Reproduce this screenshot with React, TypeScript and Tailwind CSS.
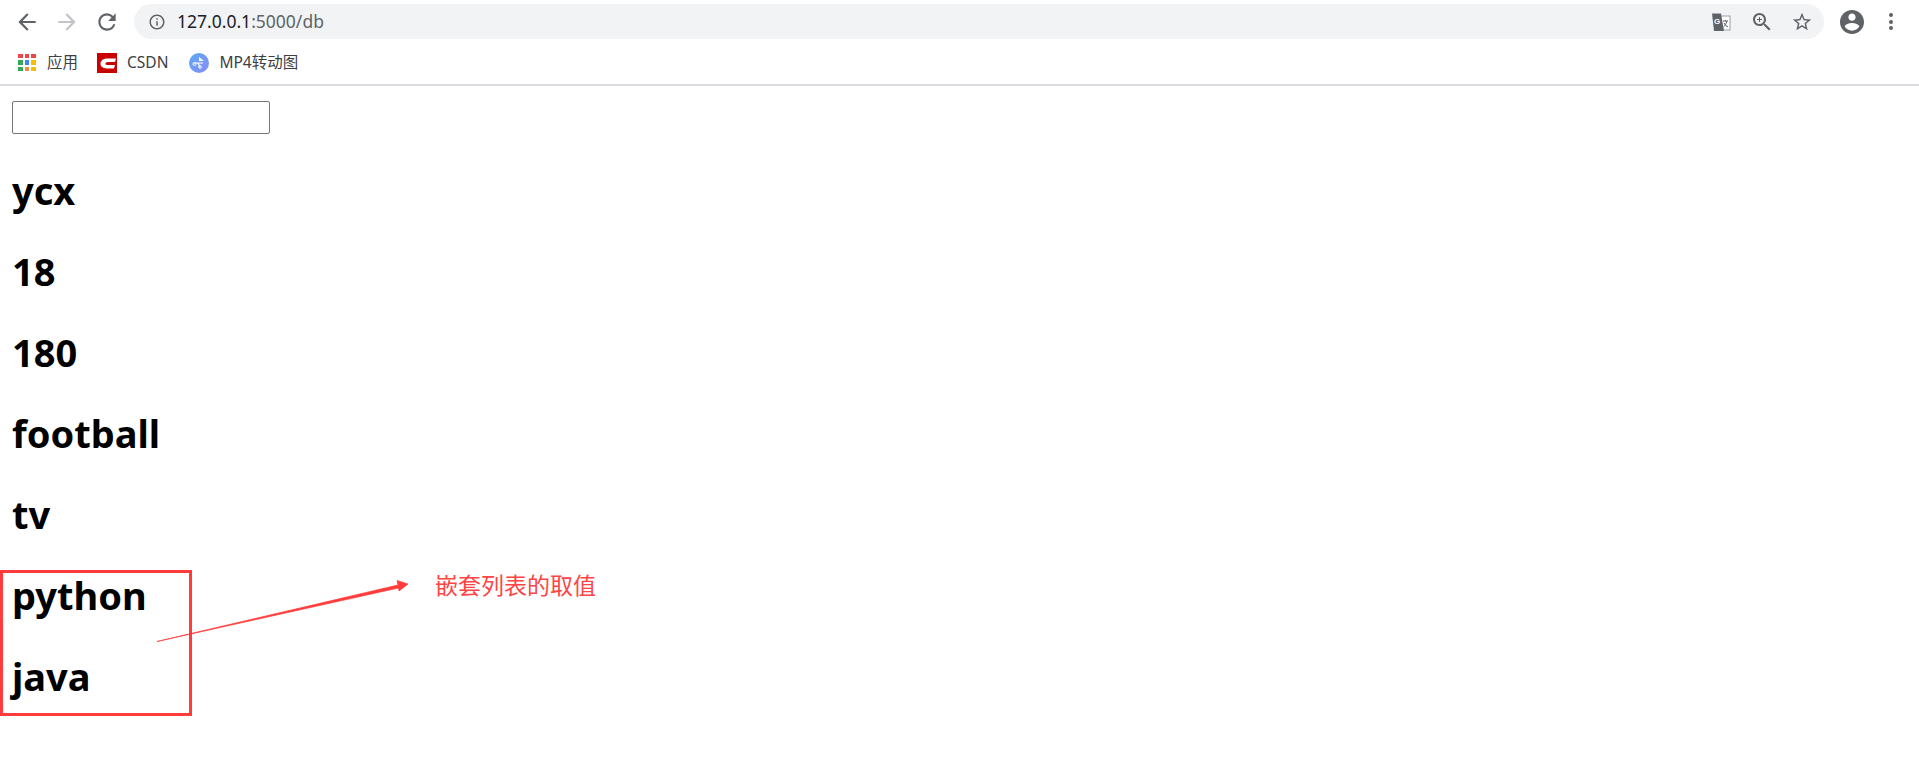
const items = ['ycx', '18', '180', 'football', 'tv', 'python', 'java']

function Glyph({ d, size, viewBox = '0 0 24 24', className }: { d: string; size: number; viewBox?: string; className?: string }) {
  return (
    <svg width={size} height={size} viewBox={viewBox} fill="currentColor" className={'shrink-0 ' + (className ?? '')}>
      <path d={d} />
    </svg>
  )
}

function AppsIcon() {
  const colors = ['#ef4444', '#ef4444', '#ef4444', '#34a853', '#4285f4', '#fbbc04', '#34a853', '#ea8f3c', '#fbbc04']
  return (
    <div className="grid grid-cols-3 gap-[2px] w-[18px] shrink-0">
      {colors.map((c, i) => (
        <span key={i} className="w-[4.500px] h-[4.500px]" style={{ backgroundColor: c }} />
      ))}
    </div>
  )
}

function CsdnIcon() {
  return (
    <svg width="20" height="20" viewBox="0 0 20 20" className="shrink-0">
      <rect width="20" height="20" fill="#c80000" />
      <path d="M19 5.500 H10 C6 5.500 3.500 8 3.500 10.800 C3.500 13.500 6 15.500 10 15.500 H17 L18 12 H11 C9 12 8.500 11.400 8.500 10.700 C8.500 9.800 9.200 9 11 9 H18 Z" fill="#fff" />
    </svg>
  )
}

function Mp4Icon() {
  return (
    <svg width="20" height="20" viewBox="0 0 20 20" className="shrink-0">
      <defs>
        <linearGradient id="mp4" x1="0" y1="0" x2="1" y2="1">
          <stop offset="0" stopColor="#5aa9f8" />
          <stop offset="1" stopColor="#8a8cf5" />
        </linearGradient>
      </defs>
      <circle cx="10" cy="10" r="10" fill="url(#mp4)" />
      <path d="M10 4 L15 8 H10 Z" fill="#fff" />
      <path d="M5 10 L14 10 M9 10 L11 14" stroke="#fff" strokeWidth="1.2" fill="none" />
      <circle cx="5.500" cy="11" r="1.500" fill="none" stroke="#fff" />
      <circle cx="11" cy="14" r="1.300" fill="none" stroke="#fff" />
    </svg>
  )
}

function TranslateIcon() {
  return (
    <svg width="20" height="20" viewBox="0 0 20 20" className="shrink-0">
      <rect x="6.500" y="4" width="12.500" height="14" fill="#fff" stroke="#9aa0a6" />
      <path d="M1 1.500 H10 L13 19 H3 Z" fill="#5f6368" />
      <text x="3" y="12" fontSize="8" fontWeight="700" fill="#fff" fontFamily="Liberation Sans, sans-serif">G</text>
      <path d="M12 9 H17 M14.500 8 V9 M16 9 C15 12 14 14 12.500 15 M13 11 C14 13 15 14 17 15" stroke="#5f6368" strokeWidth="1" fill="none" />
    </svg>
  )
}

export default function App() {
  return (
    <div className="relative min-h-[777px] bg-white font-['Noto_Sans','Noto_Sans_CJK_SC',sans-serif] text-black overflow-hidden">
      <div className="h-[43px] flex items-center pl-[14px]">
        <Glyph size={26} className="text-[#5f6368]" d="M20 11H7.830l5.590-5.590L12 4l-8 8 8 8 1.410-1.410L7.830 13H20v-2z" />
        <Glyph size={26} className="text-[#c2c4c7] ml-[14px]" d="M12 4l-1.410 1.410L16.170 11H4v2h12.170l-5.580 5.590L12 20l8-8z" />
        <Glyph size={26} className="text-[#5f6368] ml-[14px]" d="M17.650 6.350A7.958 7.958 0 0 0 12 4c-4.420 0-7.990 3.580-7.990 8s3.570 8 7.990 8c3.730 0 6.840-2.550 7.730-6h-2.080A5.990 5.990 0 0 1 12 18c-3.310 0-6-2.690-6-6s2.690-6 6-6c1.660 0 3.140.690 4.220 1.780L13 11h7V4l-2.350 2.350z" />
        <div className="ml-[14px] w-[1690px] h-[35px] rounded-full bg-[#f1f3f4] flex items-center pl-[14px] pr-[11px] shrink-0">
          <Glyph size={18} className="text-[#5f6368]" d="M11 7h2v2h-2zm0 4h2v6h-2zm1-9C6.480 2 2 6.480 2 12s4.480 10 10 10 10-4.480 10-10S17.520 2 12 2zm0 18c-4.410 0-8-3.590-8-8s3.590-8 8-8 8 3.590 8 8-3.590 8-8 8z" />
          <span className="ml-[11px] text-[17.500px]">
            <span className="text-[#202124]">127.0.0.1</span>
            <span className="text-[#5f6368]">:5000/db</span>
          </span>
          <div className="ml-auto flex items-center text-[#5f6368]">
            <TranslateIcon />
            <Glyph size={24} className="ml-[19px]" d="M15.500 14h-.790l-.280-.270C15.410 12.590 16 11.110 16 9.500 16 5.910 13.090 3 9.500 3S3 5.910 3 9.500 5.910 16 9.500 16c1.610 0 3.090-.590 4.230-1.570l.270.280v.790l5 4.990L20.490 19l-4.990-5zm-6 0C7.010 14 5 11.990 5 9.500S7.010 5 9.500 5 14 7.010 14 9.500 11.990 14 9.500 14zM12 10h-2v2H9v-2H7V9h2V7h1v2h2v1z" />
            <Glyph size={22} className="ml-[17px]" d="M22 9.240l-7.190-.620L12 2 9.190 8.630 2 9.240l5.460 4.730L5.820 21 12 17.270 18.180 21l-1.630-7.030L22 9.240zM12 15.400l-3.760 2.270 1-4.280-3.320-2.880 4.380-.380L12 6.100l1.710 4.040 4.380.380-3.320 2.880 1 4.280L12 15.400z" />
          </div>
        </div>
        <Glyph size={24} viewBox="2 2 20 20" className="text-[#5f6368] ml-[16px]" d="M12 2C6.480 2 2 6.480 2 12s4.480 10 10 10 10-4.480 10-10S17.520 2 12 2zm0 3c1.660 0 3 1.340 3 3s-1.340 3-3 3-3-1.340-3-3 1.340-3 3-3zm0 14.200c-2.500 0-4.710-1.280-6-3.220.030-1.990 4-3.080 6-3.080 1.990 0 5.970 1.090 6 3.080-1.290 1.940-3.500 3.220-6 3.220z" />
        <div className="ml-[25px] flex flex-col gap-[2.500px]">
          <span className="w-[4px] h-[4px] rounded-full bg-[#5f6368]" />
          <span className="w-[4px] h-[4px] rounded-full bg-[#5f6368]" />
          <span className="w-[4px] h-[4px] rounded-full bg-[#5f6368]" />
        </div>
      </div>

      <div className="h-[39px] pb-[2px] flex items-center pl-[18px] text-[15.500px] text-[#3c4043] border-b-2 border-[#dadce0] box-content">
        <AppsIcon />
        <span className="ml-[11px]">应用</span>
        <div className="ml-[19px]"><CsdnIcon /></div>
        <span className="ml-[10px]">CSDN</span>
        <div className="ml-[21px]"><Mp4Icon /></div>
        <span className="ml-[10px]">MP4转动图</span>
      </div>

      <div className="pl-[12px] pt-[15px]">
        <input className="block w-[258px] h-[33px] border border-[#767676] rounded-[2px]" />
        {items.map((item) => (
          <h1 key={item} className="text-[38px] font-bold leading-[54px] mt-[27px] first-of-type:mt-[29px]">
            {item}
          </h1>
        ))}
      </div>

      <div className="absolute left-0 top-[570px] w-[192px] h-[146px] border-[3px] border-[#ff3b3b]" />
      <svg className="absolute left-[150px] top-[570px]" width="270" height="100" viewBox="0 0 270 100">
        <path d="M7 71.500 L248 15 L247 10.500 L258 14 L249 21 L248.500 18 Z" fill="#ff3b3b" stroke="#ff3b3b" strokeWidth="0.7" strokeLinejoin="round" />
      </svg>
      <div className="absolute left-[435px] top-[570px] text-[23px] leading-[30px] text-[#ff4444]">嵌套列表的取值</div>
    </div>
  )
}
